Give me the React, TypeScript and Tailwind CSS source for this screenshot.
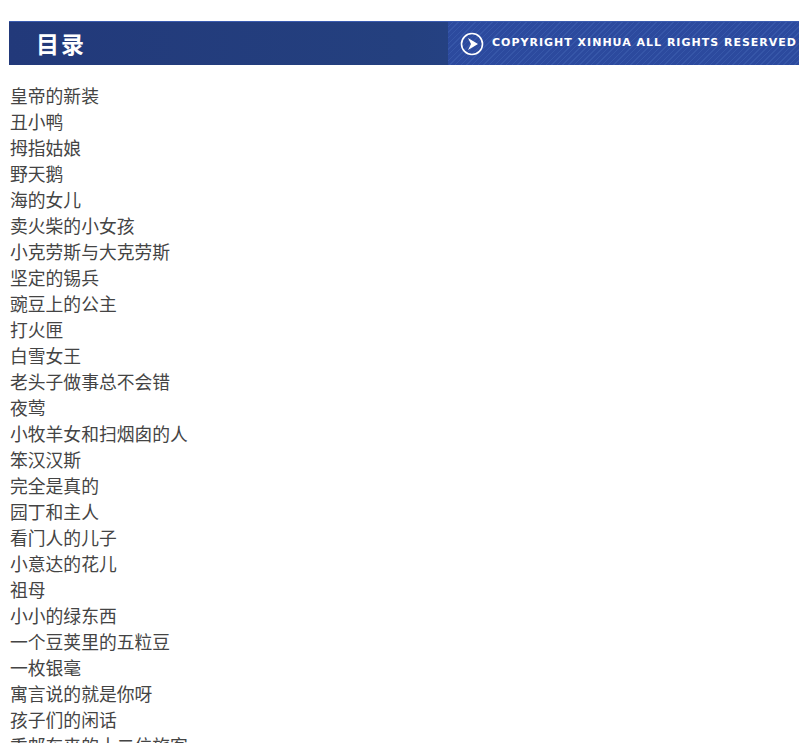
const items = ["皇帝的新装","丑小鸭","拇指姑娘","野天鹅","海的女儿","卖火柴的小女孩","小克劳斯与大克劳斯","坚定的锡兵","豌豆上的公主","打火匣","白雪女王","老头子做事总不会错","夜莺","小牧羊女和扫烟囱的人","笨汉汉斯","完全是真的","园丁和主人","看门人的儿子","小意达的花儿","祖母","小小的绿东西","一个豆荚里的五粒豆","一枚银毫","寓言说的就是你呀","孩子们的闲话","乘邮车来的十二位旅客"];
export default function App() {
  return (
    <div className="w-[800px] h-[743px] overflow-hidden bg-white" style={{fontFamily:'"Noto Sans CJK SC", "Liberation Sans", sans-serif'}}>
      <div className="pt-[21px] pl-[9px] pr-[1px]">
        <div className="h-[44px] flex items-center justify-between bg-gradient-to-r from-[#22397a] via-[#24407f] to-[#2d4a9a] border-t border-[#3a5bb0]">
          <div className="pl-[27px] text-white text-[23px] font-bold tracking-[2px]">目录</div>
          <div className="flex items-center gap-[8px] pr-[2px] h-full pl-3 bg-[repeating-linear-gradient(135deg,#2c4a9e_0px,#2c4a9e_3px,#3656a8_3px,#3656a8_4px)]">
            <svg width="24" height="24" viewBox="0 0 24 24"><circle cx="12" cy="12" r="10.5" fill="none" stroke="white" strokeWidth="1.6"/><path d="M8 6 L18 12 L8 18 L11 12 Z" fill="white"/></svg>
            <span className="text-white text-[11px] font-bold tracking-[1px]" style={{fontFamily:'"DejaVu Sans", sans-serif'}}>COPYRIGHT XINHUA ALL RIGHTS RESERVED</span>
          </div>
        </div>
      </div>
      <div className="pt-[17px] pl-[10px]">
        {items.map((t,i)=>(<div key={i} className="h-[26px] leading-[26px] text-[17.8px] text-[#444] whitespace-nowrap">{t}</div>))}
      </div>
    </div>
  );
}
